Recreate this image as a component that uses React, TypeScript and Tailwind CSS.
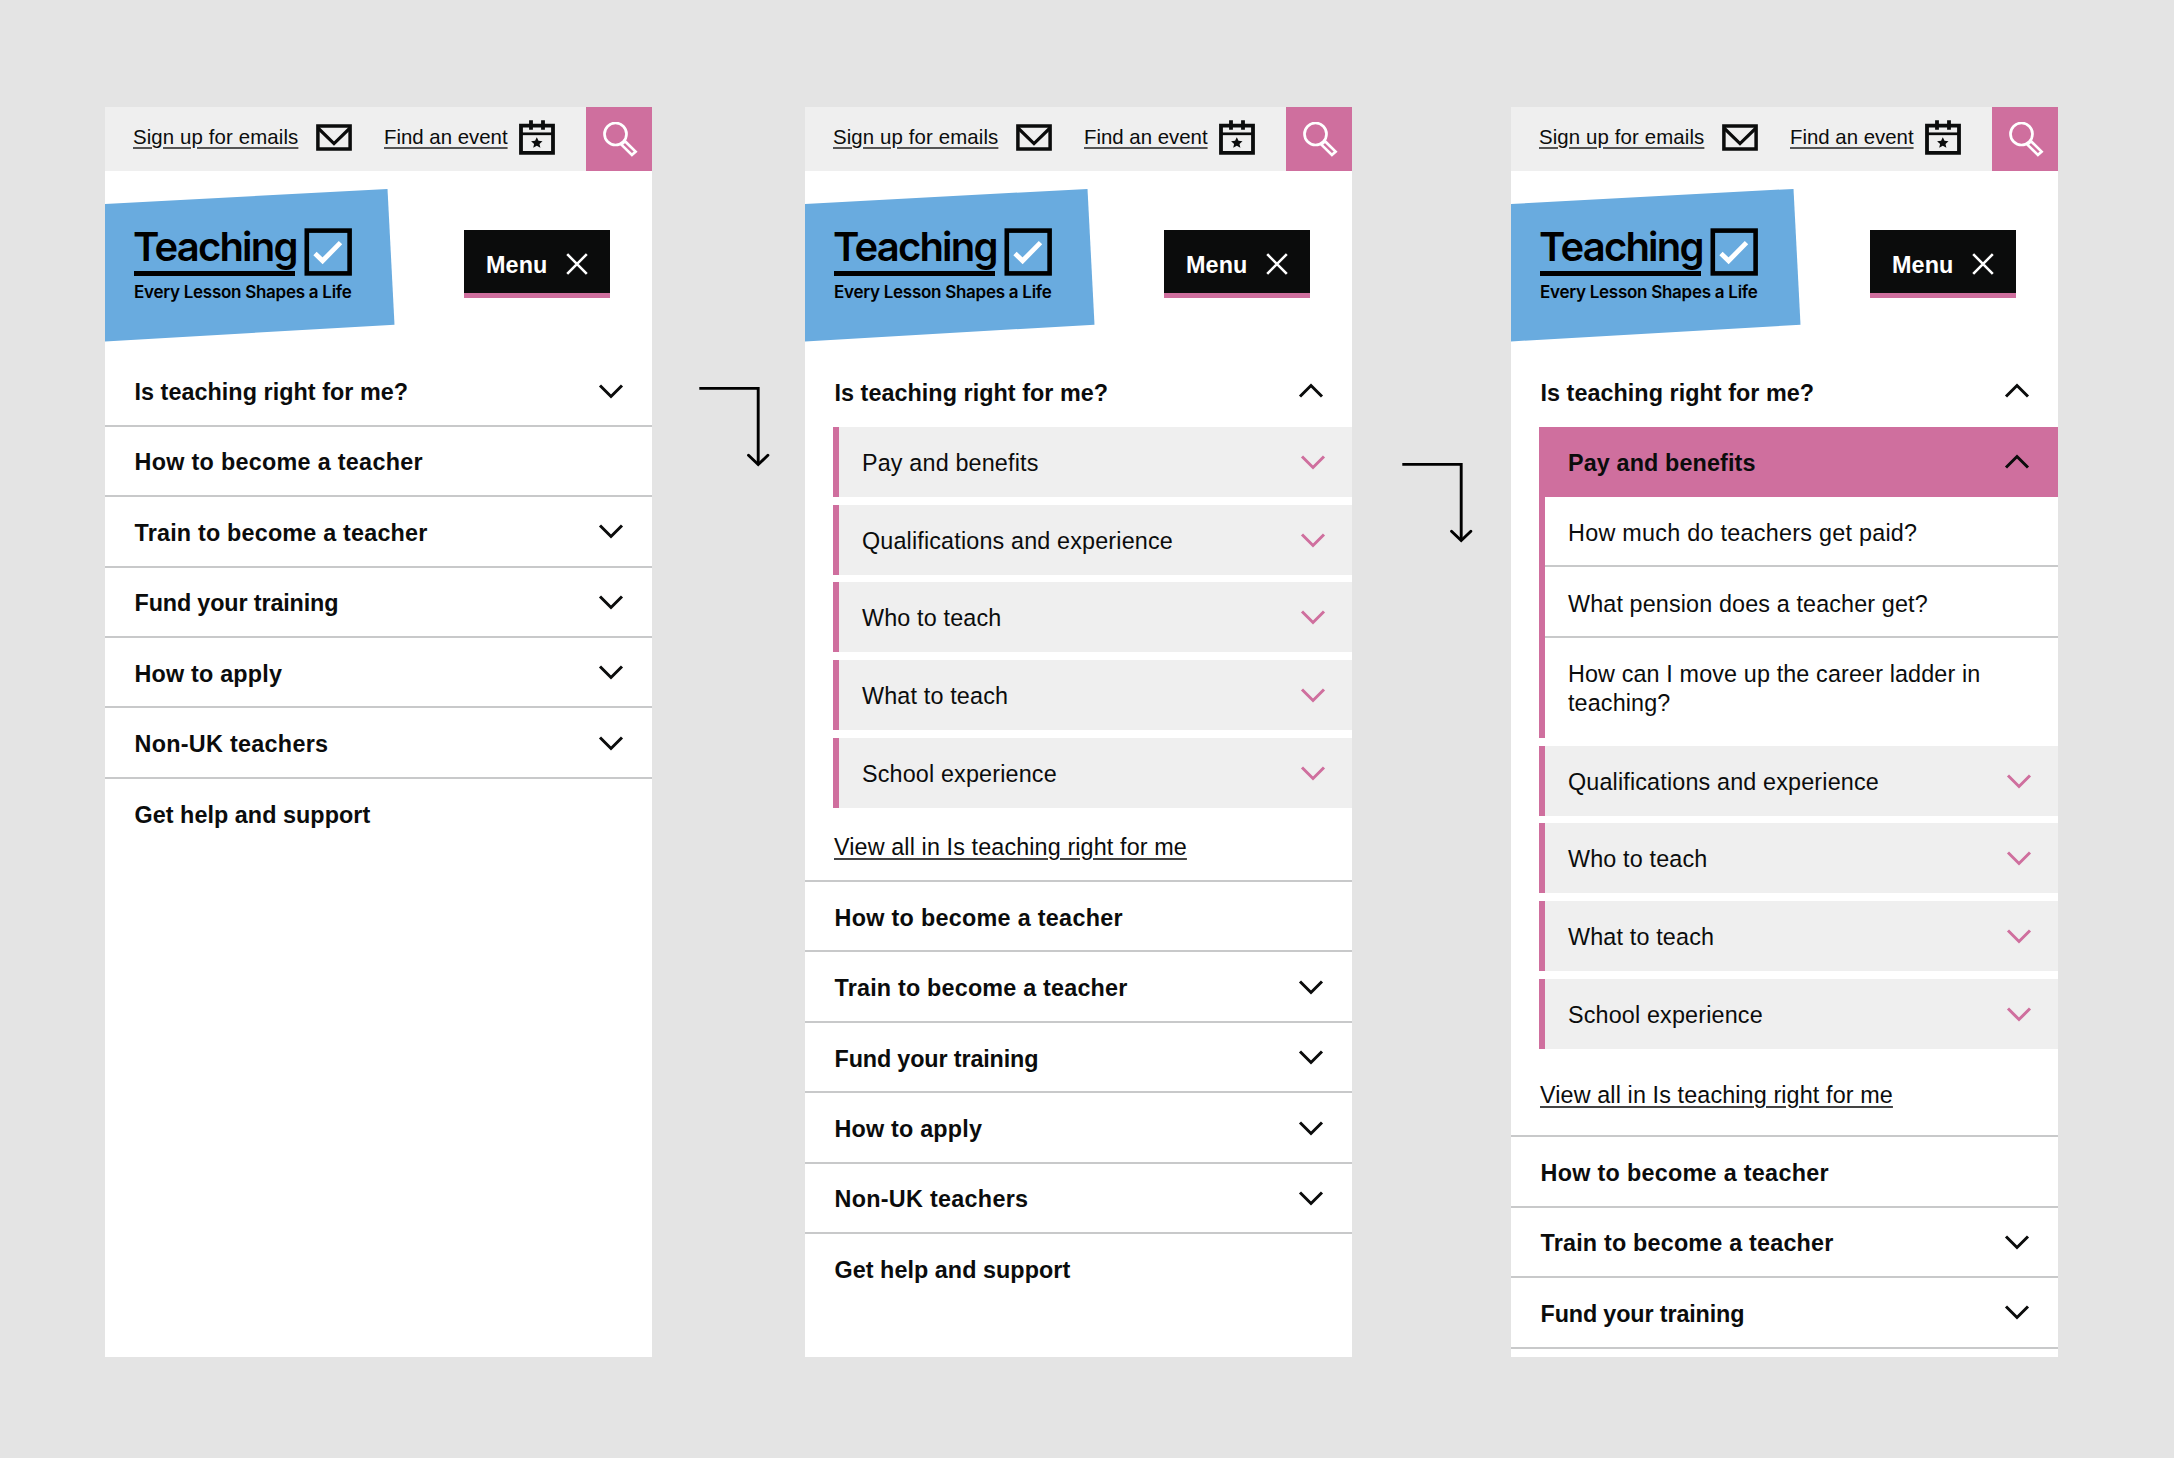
import type { ReactNode } from "react";

const PINK = "#cf6f9e";

function Chevron({ up = false, pink = false }: { up?: boolean; pink?: boolean }) {
  return (
    <svg className="block h-[16px] w-[26px] shrink-0" viewBox="0 0 26 16" fill="none">
      <path d={up ? "M2 13.5 13 2.5 24 13.5" : "M2 2.5 13 13.5 24 2.5"} stroke={pink ? PINK : "#0b0c0c"} strokeWidth="3" />
    </svg>
  );
}

function TopBar() {
  return (
    <div className="flex h-[64px] items-stretch bg-[#efefef] text-[20.4px] leading-[26px]">
      <div className="flex flex-1 items-start pl-[28px]">
        <a className="mt-[17px] w-[165px] whitespace-nowrap tracking-[0.12px] underline decoration-[#555] decoration-2 underline-offset-[3px]">Sign up for emails</a>
        <svg className="ml-[18px] mt-[17px] h-[27px] w-[36px]" viewBox="0 0 36 27" fill="none" stroke="#0b0c0c">
          <path d="M1.9 1.9H34.1V25.1H1.9Z" strokeWidth="3.5" />
          <path d="M2 4 18 19.6 34 4" strokeWidth="3.2" />
        </svg>
        <a className="ml-[32px] mt-[17px] w-[124px] whitespace-nowrap underline decoration-[#555] decoration-2 underline-offset-[3px]">Find an event</a>
        <svg className="ml-[11px] mt-[13px] h-[36px] w-[36px]" viewBox="0 0 36 36" fill="none" stroke="#0b0c0c">
          <path d="M2 5.6H34V32.8H2Z" strokeWidth="3.8" />
          <path d="M2 13.8H34" strokeWidth="2.7" />
          <path d="M12 .3V9.8M24 .3V9.8" strokeWidth="3.8" />
          <path d="M17.8 17.2 19.5 20.8 23.5 21.2 20.5 23.9 21.4 27.8 17.8 25.8 14.2 27.8 15.1 23.9 12.1 21.2 16.1 20.8Z" fill="#0b0c0c" stroke="none" />
        </svg>
      </div>
      <div className="flex w-[66px] bg-[#cf6f9e]">
        <svg className="ml-[17px] mt-[15px] h-[36px] w-[36px]" viewBox="0 0 36 36" fill="none" stroke="#fff" strokeWidth="2.7">
          <circle cx="12.5" cy="12" r="11" />
          <path d="M18.4 22.6 22 19.2 32.6 29.6 28.9 32.9Z" />
        </svg>
      </div>
    </div>
  );
}

function Header() {
  return (
    <div className="flex h-[185.3px]">
      <div className="relative h-[170px] w-[290px]">
        <svg className="absolute left-0 top-[17px] h-[154px] w-[290px]" viewBox="0 0 290 154">
          <path d="M0 16 282.5 .9 289.5 136.7 0 153.4Z" fill="#69abdf" />
        </svg>
        <div className="relative ml-[29px] mt-[57px] w-[218px] font-[Inter] text-black">
          <div className="flex h-[48px] justify-between">
            <div className="h-[48px] w-[161px] whitespace-nowrap border-b-[5px] border-black text-[40px] font-semibold leading-[38px] tracking-[-1.8px]">
              <span className="-ml-[1px]">Teaching</span>
            </div>
            <svg className="h-[48px] w-[48px]" viewBox="0 0 48 48" fill="none">
              <rect x="2.8" y="2.6" width="42.8" height="42.8" stroke="#000" strokeWidth="4.6" />
              <path d="M11 25.5 18.6 32.8 36.5 14.6" stroke="#fff" strokeWidth="4.8" />
            </svg>
          </div>
          <div className="mt-[6px] whitespace-nowrap text-[17px] font-semibold leading-[20px] tracking-[-0.27px]">Every Lesson Shapes a Life</div>
        </div>
      </div>
      <div className="ml-[69px] mt-[59px] flex h-[68px] w-[146px] items-center border-b-[5px] border-[#cf6f9e] bg-[#0b0c0c] pl-[22px] text-[23.4px] font-bold text-white">
        <span className="mt-[9px] w-[62px] tracking-[0.1px]">Menu</span>
        <svg className="ml-[18px] mt-[4px] h-[22px] w-[22px]" viewBox="0 0 22 22" stroke="#fff" strokeWidth="2.6">
          <path d="M1.2 1.2 20.8 20.8M20.8 1.2 1.2 20.8" />
        </svg>
      </div>
    </div>
  );
}

const TRACKING: Record<string, string> = {
  "Is teaching right for me?": "tracking-[0.05px]",
  "How to become a teacher": "tracking-[0.3px]",
  "Train to become a teacher": "tracking-[0.2px]",
  "Fund your training": "tracking-[-0.13px]",
  "How to apply": "tracking-[0.2px]",
  "Non-UK teachers": "tracking-[0.3px]",
  "Get help and support": "tracking-[0.05px]",
};

function Row({ label, icon = "down", line = true }: { label: string; icon?: "down" | "up" | "none"; line?: boolean }) {
  return (
    <div className={`flex h-[70.45px] items-center justify-between pl-[29.5px] pr-[28px] text-[23.35px] font-bold ${line ? "border-b-2 border-[#c8c9ca]" : "pb-[1px]"}`}>
      <span className={`mt-[4px] ${TRACKING[label]}`}>{label}</span>
      {icon !== "none" && <Chevron up={icon === "up"} />}
    </div>
  );
}

function SubRow({ label }: { label: string }) {
  return (
    <div className="mb-[7.6px] ml-[28px] flex h-[70.2px] items-center justify-between border-l-[6px] border-[#cf6f9e] bg-[#efefef] pl-[23px] pr-[26px] text-[23.35px] tracking-[0.16px]">
      <span className="mt-[3px]">{label}</span>
      <Chevron pink />
    </div>
  );
}

function ViewAll({ tall = false }: { tall?: boolean }) {
  return (
    <div className={`border-b-2 border-[#c8c9ca] pl-[29px] text-[23.35px] tracking-[0.12px] ${tall ? "h-[80.7px] pt-[21px]" : "h-[66.4px] pt-[14px]"}`}>
      <a className="leading-[28px] underline decoration-[#444] decoration-2 underline-offset-[3px]">View all in Is teaching right for me</a>
    </div>
  );
}

function Screen({ children }: { children: ReactNode }) {
  return (
    <div className="h-[1250px] w-[547px] shrink-0 overflow-hidden bg-white">
      <TopBar />
      <Header />
      {children}
    </div>
  );
}

function Arrow({ low = false }: { low?: boolean }) {
  return (
    <svg className={`h-[82px] w-[72px] shrink-0 ${low ? "ml-[50px] mr-[37px] mt-[355px]" : "ml-[47px] mr-[34px] mt-[279px]"}`} viewBox="0 0 72 82" fill="none" stroke="#000" strokeWidth="2.9">
      <path d="M.3 2.4H59.2V78" />
      <path d="M49.5 69.2 59.2 78.6 68.9 69.2" strokeLinecap="round" />
    </svg>
  );
}

const SUBS = ["Qualifications and experience", "Who to teach", "What to teach", "School experience"];

export default function App() {
  return (
    <div className="flex h-[1458px] w-[2174px] items-start overflow-hidden bg-[#e4e4e4] pl-[105px] pt-[107px] font-['Liberation_Sans',Arial,sans-serif] text-[#0b0c0c]">
      <Screen>
        <Row label="Is teaching right for me?" />
        <Row label="How to become a teacher" icon="none" />
        <Row label="Train to become a teacher" />
        <Row label="Fund your training" />
        <Row label="How to apply" />
        <Row label="Non-UK teachers" />
        <Row label="Get help and support" icon="none" line={false} />
      </Screen>
      <Arrow />
      <Screen>
        <Row label="Is teaching right for me?" icon="up" line={false} />
        <div>
          <SubRow label="Pay and benefits" />
          {SUBS.map((s) => <SubRow key={s} label={s} />)}
        </div>
        <ViewAll />
        <Row label="How to become a teacher" icon="none" />
        <Row label="Train to become a teacher" />
        <Row label="Fund your training" />
        <Row label="How to apply" />
        <Row label="Non-UK teachers" />
        <Row label="Get help and support" icon="none" line={false} />
      </Screen>
      <Arrow low />
      <Screen>
        <Row label="Is teaching right for me?" icon="up" line={false} />
        <div>
          <div className="mb-[7.6px] ml-[28px] h-[311.2px] border-l-[6px] border-[#cf6f9e] text-[23.35px] tracking-[0.13px]">
            <div className="flex h-[70.2px] items-center justify-between bg-[#cf6f9e] pl-[23px] pr-[28px] font-bold">
              <span className="mt-[3px]">Pay and benefits</span>
              <Chevron up />
            </div>
            <div className="flex h-[70.45px] items-center border-b-2 border-[#c8c9ca] pl-[23px] tracking-[0.27px]"><span className="mt-[5px]">How much do teachers get paid?</span></div>
            <div className="flex h-[70.45px] items-center border-b-2 border-[#c8c9ca] pl-[23px]"><span className="mt-[5px]">What pension does a teacher get?</span></div>
            <div className="pl-[23px] pr-10 pt-[22.4px] leading-[29.2px]">How can I move up the career ladder in teaching?</div>
          </div>
          {SUBS.map((s) => <SubRow key={s} label={s} />)}
        </div>
        <ViewAll tall />
        <Row label="How to become a teacher" icon="none" />
        <Row label="Train to become a teacher" />
        <Row label="Fund your training" />
      </Screen>
    </div>
  );
}
